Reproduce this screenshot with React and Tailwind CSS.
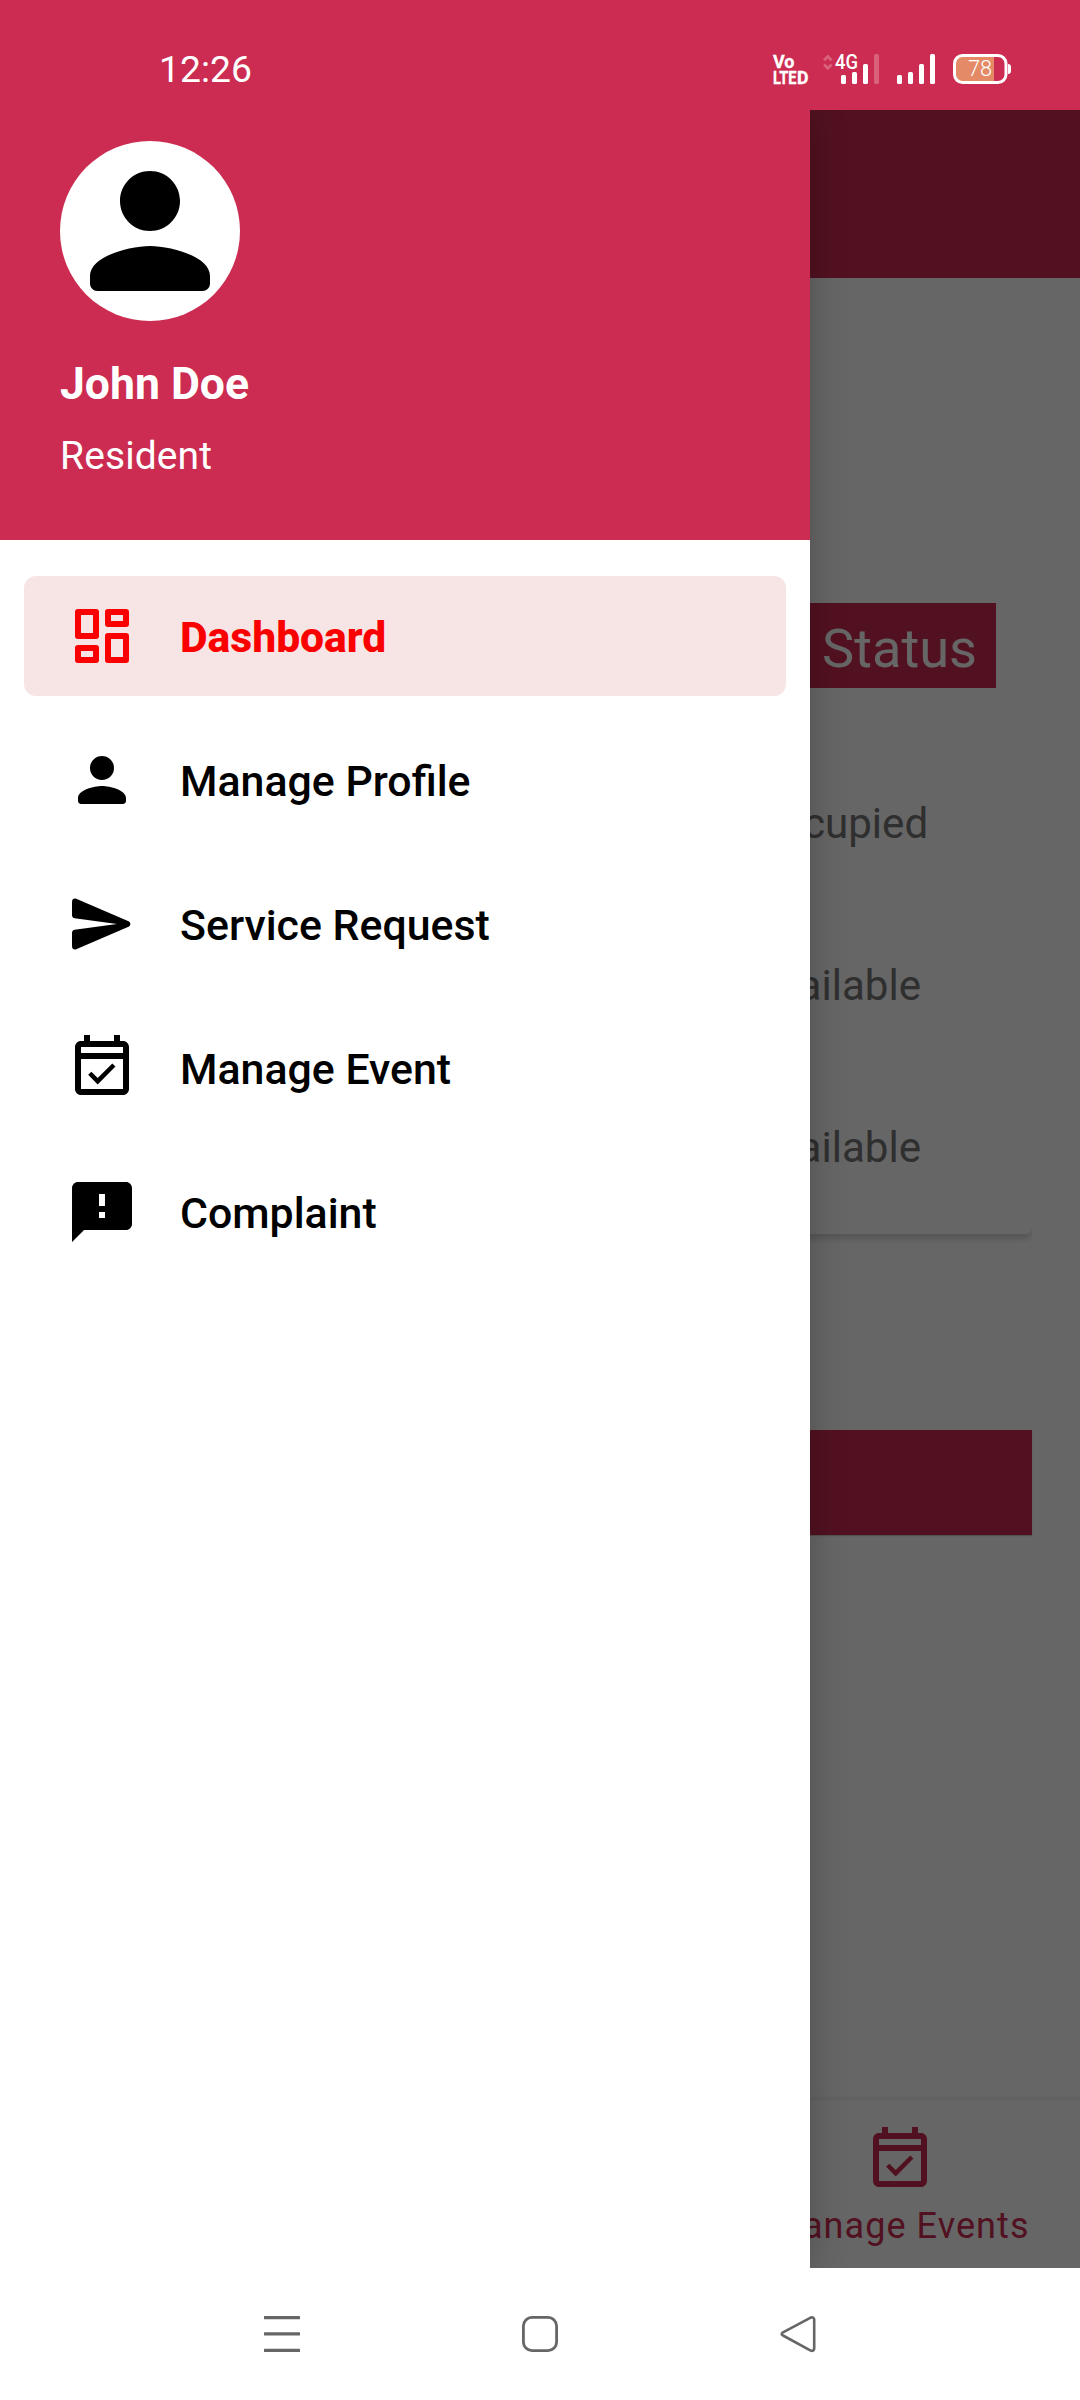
import React from "react";

const PATHS = {
  person:
    "M12 12c2.21 0 4-1.79 4-4s-1.79-4-4-4-4 1.79-4 4 1.79 4 4 4zm0 2c-2.67 0-8 1.34-8 4v1c0 .55.45 1 1 1h14c.55 0 1-.45 1-1v-1c0-2.66-5.33-4-8-4z",
  send: "M3.4 20.4l17.45-7.48c.81-.35.81-1.49 0-1.84L3.4 3.6c-.66-.29-1.39.2-1.39.91L2 9.12c0 .5.37.93.87.99L17 12 2.87 13.88c-.5.07-.87.5-.87 1l.01 4.61c0 .71.73 1.2 1.39.91z",
  event:
    "M19 3h-1V1h-2v2H8V1H6v2H5c-1.11 0-2 .9-2 2v14c0 1.1.89 2 2 2h14c1.1 0 2-.9 2-2V5c0-1.1-.9-2-2-2zm0 2v2H5V5h14zM5 19V9h14v10H5zm5.56-1.54l5.93-5.93-1.06-1.06-4.87 4.87-2.11-2.11-1.06 1.06z",
  feedback:
    "M20 2H4c-1.1 0-1.99.9-1.99 2L2 22l4-4h14c1.1 0 2-.9 2-2V4c0-1.1-.9-2-2-2zm-7 12h-2v-2h2v2zm0-4h-2V6h2v4z",
  dashboard:
    "M4 3h6q1 0 1 1v8q0 1-1 1H4q-1 0-1-1V4q0-1 1-1zM5 5v6h4V5zM14 3h6q1 0 1 1v4q0 1-1 1h-6q-1 0-1-1V4q0-1 1-1zM15 5v2h4V5zM4 15h6q1 0 1 1v4q0 1-1 1H4q-1 0-1-1v-4q0-1 1-1zM5 17v2h4v-2zM14 11h6q1 0 1 1v8q0 1-1 1h-6q-1 0-1-1v-8q0-1 1-1zM15 13v6h4v-6z",
};

function Icon({ name, className }) {
  return (
    <svg viewBox="0 0 24 24" className={className} fill="currentColor" fillRule="evenodd">
      <path d={PATHS[name]} />
    </svg>
  );
}

const MENU = [
  { icon: "dashboard", label: "Dashboard", active: true },
  { icon: "person", label: "Manage Profile" },
  { icon: "send", label: "Service Request" },
  { icon: "event", label: "Manage Event" },
  { icon: "feedback", label: "Complaint" },
];

const ROWS = ["Occupied", "Available", "Available"];

function StatusIcons() {
  return (
    <svg width="242" height="44" viewBox="770 47 242 44" fill="white" fontFamily="Roboto, sans-serif">
      <text x="773" y="67.6" fontSize="17.6" fontWeight="700" textLength="21.5" lengthAdjust="spacingAndGlyphs" stroke="white" strokeWidth="0.3">Vo</text>
      <text x="773" y="84" fontSize="18.8" fontWeight="700" textLength="23.5" lengthAdjust="spacingAndGlyphs" stroke="white" strokeWidth="0.4">LTE</text>
      <text x="797" y="84" fontSize="18.8" fontWeight="700" textLength="11.5" lengthAdjust="spacingAndGlyphs" stroke="white" strokeWidth="0.4">D</text>
      <g fill="none" stroke="white" strokeWidth="2.8" opacity="0.25">
        <path d="M824 60.2l3.8-3.8 3.8 3.8M824 64.5l3.8 3.8 3.8-3.8" />
      </g>
      <text x="835" y="69.2" fontSize="20.5" fontWeight="500" textLength="23" lengthAdjust="spacingAndGlyphs">4G</text>
      <rect x="841" y="75" width="5" height="9" rx="1.5" />
      <rect x="852" y="72" width="5" height="12" rx="1.5" />
      <rect x="863" y="64" width="5" height="20" rx="1.5" />
      <rect x="874" y="54" width="5" height="30" rx="1.5" opacity="0.25" />
      <rect x="897" y="75" width="5" height="9" rx="1.5" />
      <rect x="908" y="72" width="5" height="12" rx="1.5" />
      <rect x="919" y="64" width="5" height="20" rx="1.5" />
      <rect x="930" y="54" width="5" height="30" rx="1.5" />
      <path d="M994 56.5h-32a6.5 6.5 0 0 0-6.5 6.5v12a6.5 6.5 0 0 0 6.5 6.5h32z" fill="#e48a66" />
      <rect x="954.5" y="55.5" width="51.5" height="27" rx="8" fill="none" stroke="white" strokeWidth="3" />
      <path d="M1008 64q3 0 3 3v4q0 3-3 3z" />
      <text x="968" y="75.7" fontSize="21.7" fontWeight="300">78</text>
    </svg>
  );
}

function StatusBar() {
  return (
    <header className="flex h-[110px] shrink-0 items-start justify-between bg-[#cc2c51] pl-[159px] pr-[68px] text-white">
      <span className="mt-[49px] text-[37.3px] leading-10">12:26</span>
      <div className="mt-[47px] flex">
        <StatusIcons />
      </div>
    </header>
  );
}

function Screen() {
  return (
    <div className="flex h-full flex-col bg-white">
      <div className="h-[168px] shrink-0 bg-[#cc2c51]" />
      <div className="mx-12 mt-[281px] overflow-hidden pt-2 pb-4">
        <section className="h-[667px] rounded-md bg-white pt-9 shadow-[0_5px_6px_rgba(0,0,0,0.16)]">
          <div className="ml-9 mr-9 flex h-[85px] justify-end bg-[#cc2c51] pr-[19px]">
            <span className="pt-[3px] text-[54.2px] leading-[85px] text-white">Status</span>
          </div>
          <div className="mt-[55px] pl-[704px] text-[42.1px] text-[#757575]">
            {ROWS.map((row, i) => (
              <div key={i} className="flex h-[162px] items-center">
                {row}
              </div>
            ))}
          </div>
        </section>
      </div>
      <div className="mx-12 mt-[180px] h-[105px] shrink-0 bg-[#cc2c51] shadow-[0_1px_1px_rgba(0,0,0,0.2)]" />
      <nav className="mt-auto flex h-[168px] shrink-0 justify-end bg-white shadow-[0_-2px_4px_rgba(0,0,0,0.08)]">
        <div className="flex w-[360px] flex-col items-center pt-6 text-[#cc2c51]">
          <Icon name="event" className="size-[72px]" />
          <span className="mt-2 whitespace-nowrap text-[36px] leading-[44px] tracking-[1.07px]">
            Manage Events
          </span>
        </div>
      </nav>
    </div>
  );
}

function Drawer() {
  return (
    <aside className="absolute inset-y-0 left-0 flex w-[810px] flex-col bg-white shadow-[0_0_34px_rgba(0,0,0,0.24)]">
      <div className="h-[430px] shrink-0 bg-[#cc2c51] pl-[60px] pt-[31px] text-white">
        <div className="flex size-[180px] items-center justify-center rounded-full bg-white text-black">
          <Icon name="person" className="size-[180px]" />
        </div>
        <h1 className="mt-[39px] text-[44.5px] font-bold leading-[48px]">John Doe</h1>
        <p className="mt-[26px] text-[39px] leading-[44px] tracking-[0.1px]">Resident</p>
      </div>
      <ul className="flex flex-col gap-6 px-6 pt-9">
        {MENU.map((item) => (
          <li
            key={item.label}
            className={
              item.active
                ? "flex h-[120px] items-center gap-[42px] rounded-xl bg-[#f7e4e4] pl-[42px] font-extrabold text-[#fb0000]"
                : "flex h-[120px] items-center gap-[42px] rounded-xl pl-[42px] font-medium text-black"
            }
          >
            <Icon name={item.icon} className="size-[72px]" />
            <span className={item.active ? "pt-[3px] text-[42.6px]" : "pt-[2px] text-[42.85px]"}>{item.label}</span>
          </li>
        ))}
      </ul>
    </aside>
  );
}

function SystemNav() {
  return (
    <footer className="flex h-[132px] shrink-0 items-start justify-between bg-white pl-[264px] pr-[263px] pt-[47px] text-[#666]">
      <svg width="36" height="38" viewBox="0 0 36 38" fill="currentColor">
        <rect y="1" width="36" height="3.2" rx="0.5" />
        <rect y="17.2" width="36" height="3.4" rx="0.5" />
        <rect y="33.7" width="36" height="3.3" rx="0.5" />
      </svg>
      <svg width="38" height="38" viewBox="0 0 38 38" fill="none" stroke="currentColor" strokeWidth="2.8">
        <rect x="2.4" y="2.4" width="33.2" height="33.2" rx="8.5" />
      </svg>
      <svg width="37" height="38" viewBox="0 0 37 38" fill="none" stroke="currentColor" strokeWidth="2.6">
        <path d="M30.7 2.6L3 17.3q-2.6 1.6 0 3.2L30.7 35.6q3 1 3.5-1.8V4.4q-.5-2.8-3.500-1.8z" strokeLinejoin="round" />
      </svg>
    </footer>
  );
}

export default function App() {
  return (
    <div className="flex h-[2400px] w-[1080px] flex-col overflow-hidden bg-white font-['Roboto',sans-serif]">
      <StatusBar />
      <main className="relative h-[2158px] shrink-0 overflow-hidden">
        <Screen />
        <div className="absolute inset-0 bg-black/60" />
        <Drawer />
      </main>
      <SystemNav />
    </div>
  );
}
